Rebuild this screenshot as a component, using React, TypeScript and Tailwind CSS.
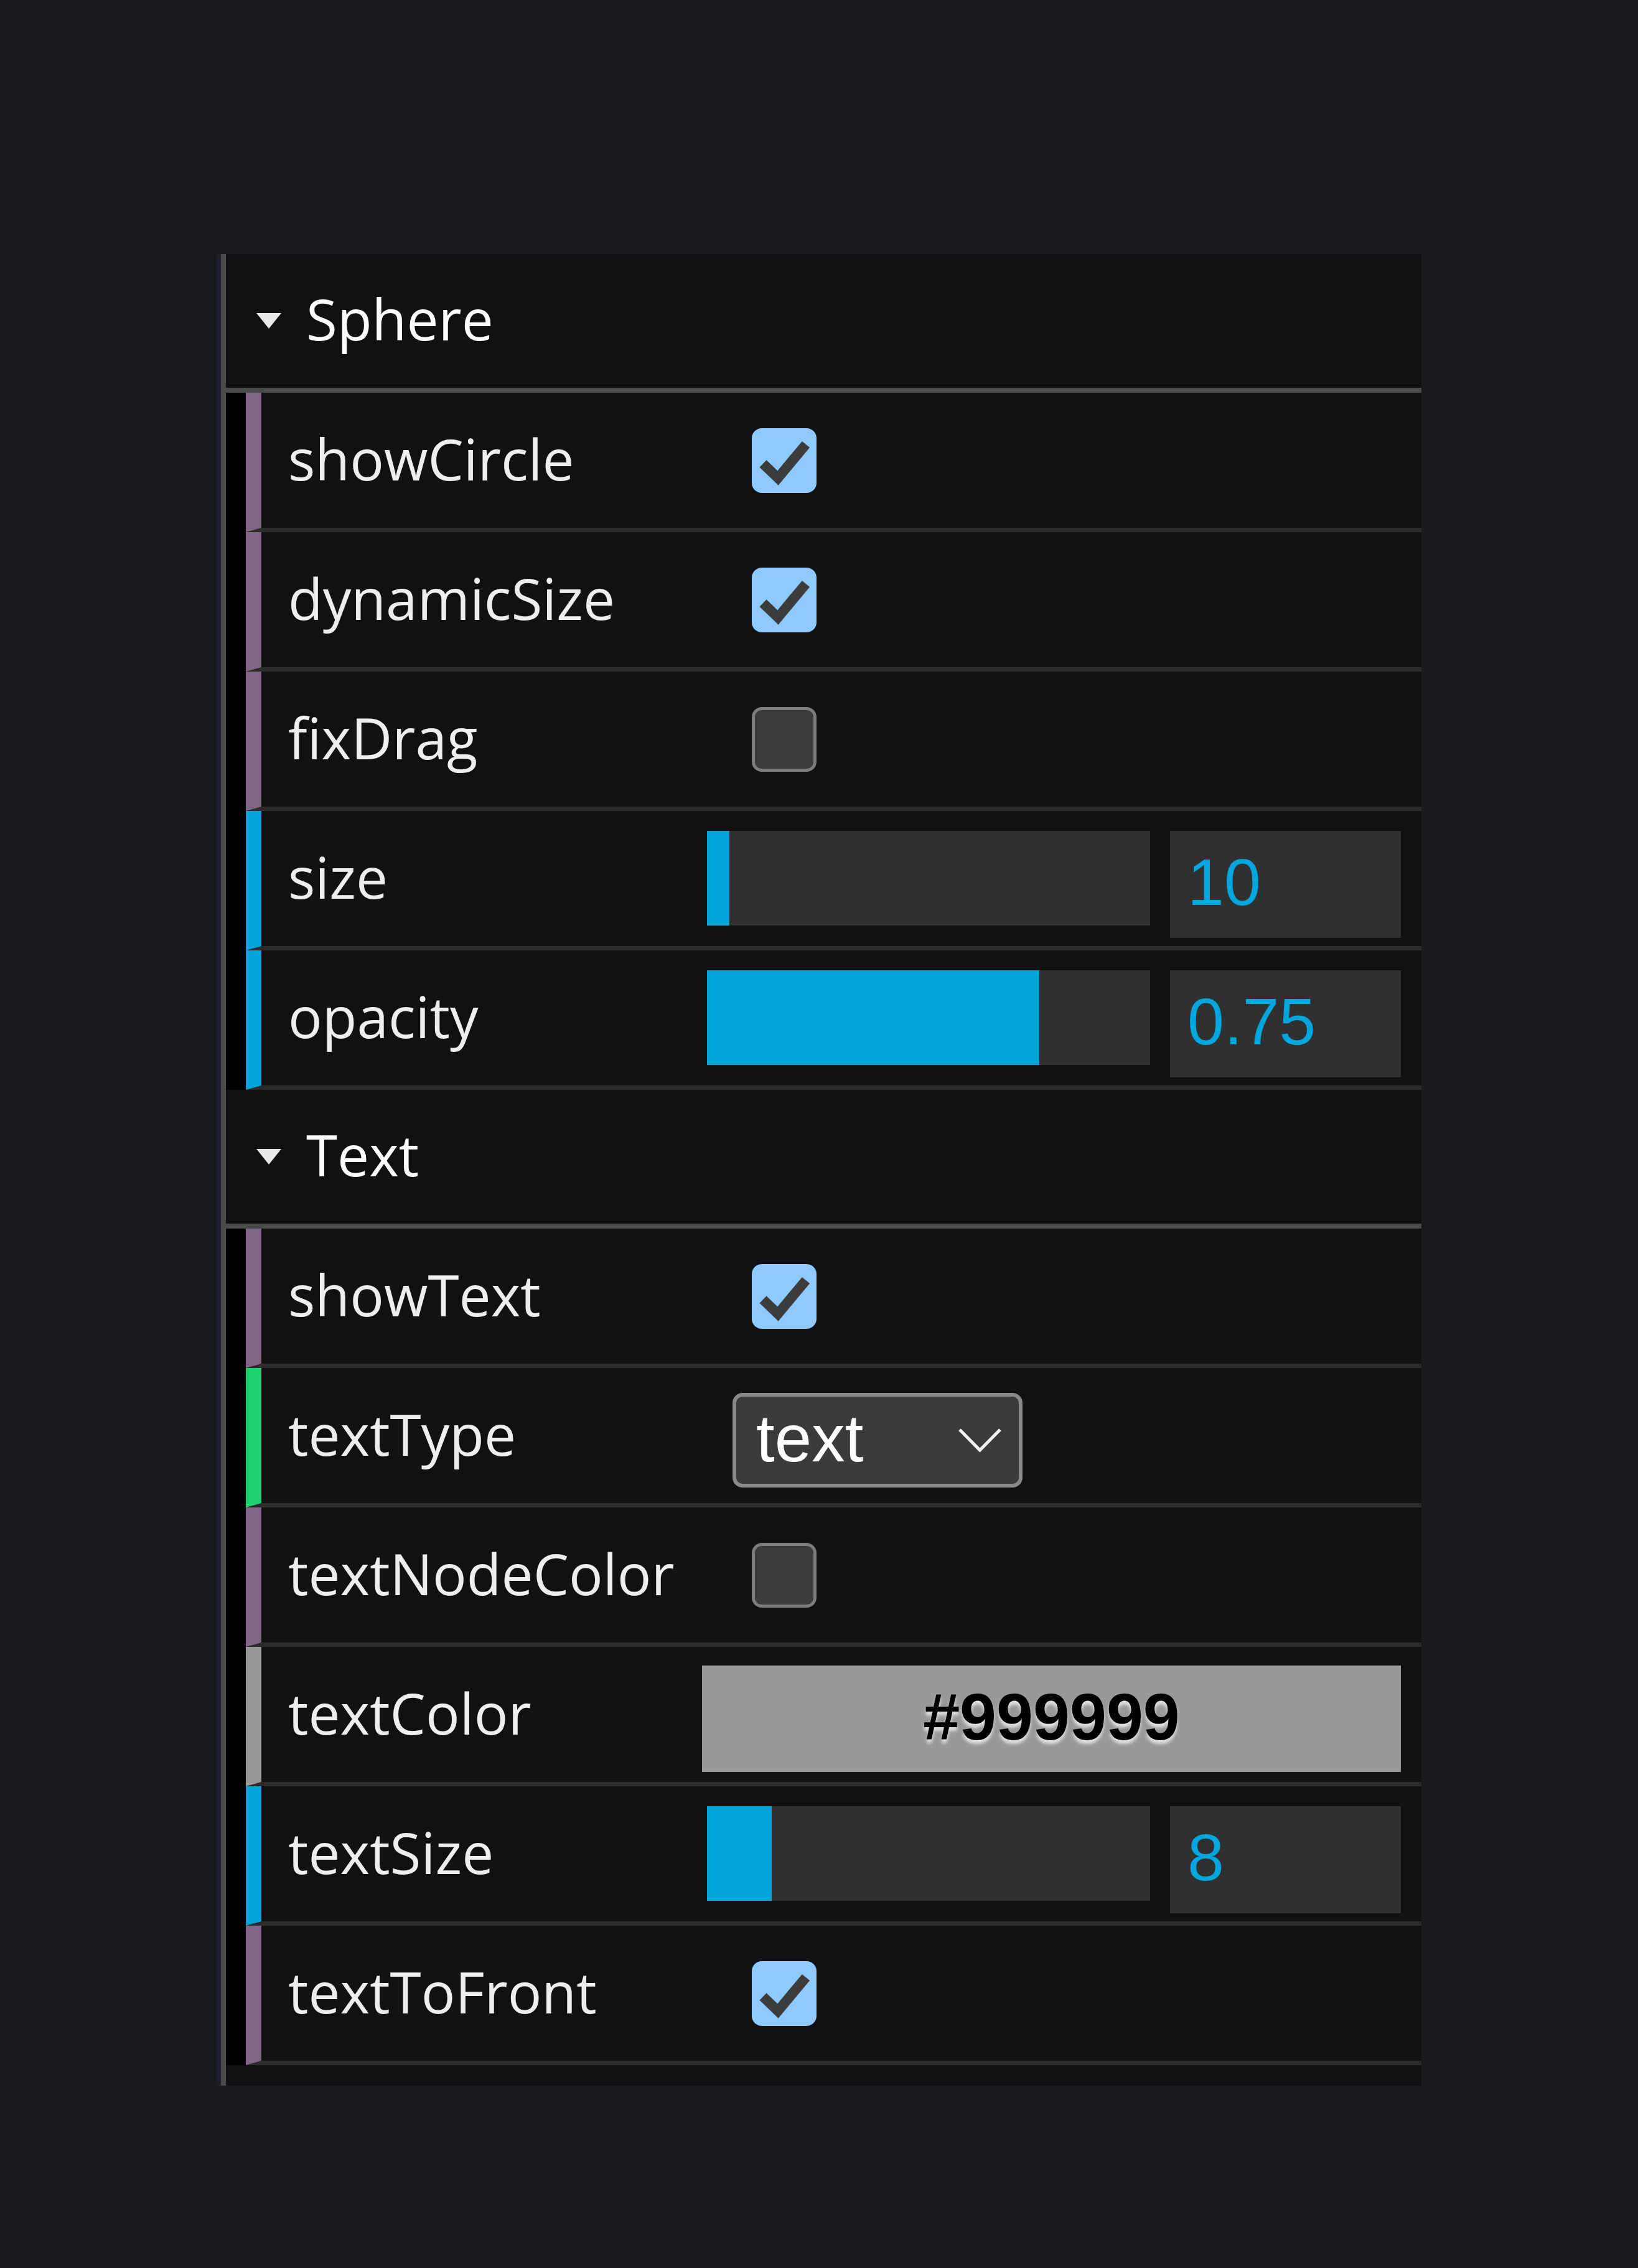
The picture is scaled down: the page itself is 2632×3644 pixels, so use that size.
import React from 'react';

const label = "font-['Open_Sans',sans-serif] text-[91px] leading-none text-[#eeeeee]";
const num = "font-['Liberation_Sans',Arial,sans-serif] text-[106px] leading-none text-[#00a6dc]";

const Row = ({ stripe, name, children }: { stripe: string; name: string; children: React.ReactNode }) => (
  <div className={`flex h-[224px] border-l-[25px] border-b-[7px] border-b-[#2c2c2c] bg-[#111111] ${stripe}`}>
    <div className={`flex w-[708px] items-center pl-[43px] pb-[4px] ${label}`}>{name}</div>
    <div className="flex w-[1123px]">{children}</div>
  </div>
);

const Checkbox = ({ checked }: { checked?: boolean }) => (
  <div className="ml-[80px] flex items-center">
    {checked ? (
      <div className="h-[104px] w-[104px] rounded-[16px] bg-[#8fcaff]">
        <svg width="104" height="104" viewBox="0 0 104 104">
          <polyline points="18,57 42,80 87,26" fill="none" stroke="#3c3c3c" strokeWidth="16" />
        </svg>
      </div>
    ) : (
      <div className="h-[104px] w-[104px] rounded-[16px] border-[5px] border-[#7d7d7d] bg-[#3c3c3c]" />
    )}
  </div>
);

const Slider = ({ pct, value }: { pct: number; value: string }) => (
  <div className="ml-[8px] flex items-start pt-[32px]">
    <div className="h-[152px] w-[712px] bg-[#303030]">
      <div className="h-full bg-[#01a4db]" style={{ width: `${pct}%` }} />
    </div>
    <div className={`ml-[32px] flex h-[172px] w-[371px] items-center bg-[#303030] pl-[28px] pb-[8px] ${num}`}>
      {value}
    </div>
  </div>
);

const Header = ({ title }: { title: string }) => (
  <div className="flex h-[223px] items-center border-b-[8px] border-[#4a4a4a] bg-[#111111] pl-[49px]">
    <svg width="40" height="25" viewBox="0 0 40 25">
      <polygon points="0,0 40,0 20,25" fill="#e8e8e8" />
    </svg>
    <span className={`ml-[40px] pb-[6px] ${label} text-white`}>{title}</span>
  </div>
);

export default function App() {
  return (
    <div className="min-h-[3644px] bg-[#1a1b1e] pt-[408px] pl-[348px]">
      <div className="w-[1936px] border-l-[7px] border-[#1c202a]">
        <div className="border-l-[8px] border-[#4b4b4b] bg-[#111111] pb-[33px]">
          <Header title="Sphere" />
          <div className="bg-black pl-[32px]">
            <Row stripe="border-l-[#806787]" name="showCircle">
              <Checkbox checked />
            </Row>
            <Row stripe="border-l-[#806787]" name="dynamicSize">
              <Checkbox checked />
            </Row>
            <Row stripe="border-l-[#806787]" name="fixDrag">
              <Checkbox />
            </Row>
            <Row stripe="border-l-[#01a4db]" name="size">
              <Slider pct={5} value="10" />
            </Row>
            <Row stripe="border-l-[#01a4db]" name="opacity">
              <Slider pct={75} value="0.75" />
            </Row>
          </div>

          <Header title="Text" />
          <div className="bg-black pl-[32px]">
            <Row stripe="border-l-[#806787]" name="showText">
              <Checkbox checked />
            </Row>
            <Row stripe="border-l-[#1ed36f]" name="textType">
              <div className="ml-[49px] pt-[40px]">
                <div className="flex h-[152px] w-[466px] items-center justify-between rounded-[16px] border-[6px] border-[#8a8a8a] bg-[#3b3b3b] pl-[32px] pr-[28px]">
                  <span className="pb-[6px] font-['Liberation_Sans',Arial,sans-serif] text-[107px] leading-none text-white">text</span>
                  <svg width="69" height="38" viewBox="0 0 69 38">
                    <polyline points="2,2 34.5,35 67,2" fill="none" stroke="#f2f2f2" strokeWidth="5" />
                  </svg>
                </div>
              </div>
            </Row>
            <Row stripe="border-l-[#806787]" name="textNodeColor">
              <Checkbox />
            </Row>
            <Row stripe="border-l-[#999999]" name="textColor">
              <div className="pt-[30px]">
                <div className="flex h-[171px] w-[1123px] items-center justify-center bg-[#999999] pb-[8px] font-['Liberation_Sans',Arial,sans-serif] text-[106px] leading-none font-bold text-black [text-shadow:0_6px_5px_rgba(255,255,255,0.7)]">
                  #999999
                </div>
              </div>
            </Row>
            <Row stripe="border-l-[#01a4db]" name="textSize">
              <Slider pct={14.6} value="8" />
            </Row>
            <Row stripe="border-l-[#806787]" name="textToFront">
              <Checkbox checked />
            </Row>
          </div>
        </div>
      </div>
    </div>
  );
}
